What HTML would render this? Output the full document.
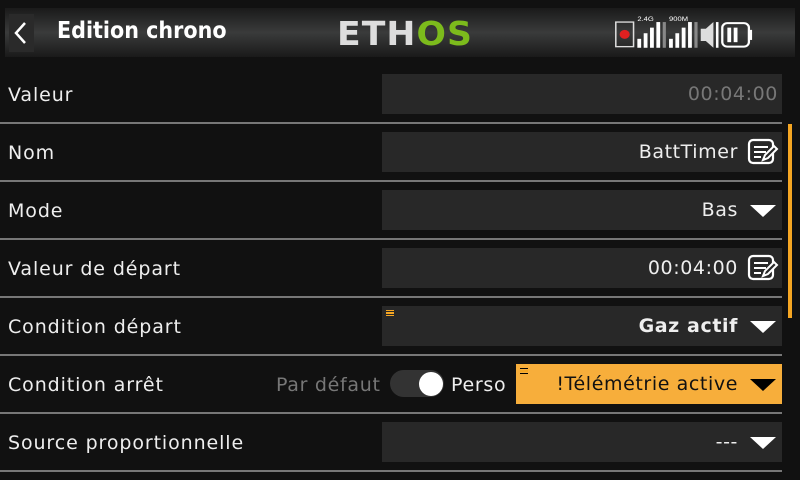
<!DOCTYPE html><html><head><style>
body{margin:0;width:800px;height:480px;background:#111;font-family:"Liberation Sans","DejaVu Sans",sans-serif;overflow:hidden;position:relative;color:#eee}
.hdr{position:absolute;left:5px;top:8px;width:790px;height:49px;background:linear-gradient(#1a1a1a,#3a3b3b 50%,#1a1a1a)}
.back{position:absolute;left:9px;top:14px;width:25px;height:38px;background:#2a2a2a}
.title{position:absolute;left:57px;top:18px;font-size:23px;font-weight:bold;color:#fff;font-family:"DejaVu Sans Condensed","DejaVu Sans",sans-serif}
.logo{position:absolute;left:337px;top:14px;font-size:33px;font-weight:bold;letter-spacing:1px;font-family:"DejaVu Sans",sans-serif;color:#ddd;transform:scaleX(1.05);transform-origin:left}
.row{position:absolute;left:0;width:782px;height:58px}
.lab{position:absolute;left:8px;top:18px;font-size:19px;letter-spacing:0.9px;color:#eee;font-family:"DejaVu Sans",sans-serif}
.sep{position:absolute;left:0;bottom:0;width:782px;height:2px;background:#777}
.f{position:absolute;left:382px;top:8px;width:400px;height:40px;background:#282828;font-size:19px;letter-spacing:0.6px;font-family:"DejaVu Sans",sans-serif}
.v{position:absolute;right:44px;top:9px;color:#eee}
.tri{position:absolute;right:6px;top:15px;width:0;height:0;border-left:13px solid transparent;border-right:13px solid transparent;border-top:12px solid #fff}
.ham{position:absolute;left:4px;top:4px;width:8px;height:6px;border-top:1.5px solid #f5a623;border-bottom:1.5px solid #f5a623;box-sizing:border-box}
.ham:after{content:"";position:absolute;left:0;top:1px;width:8px;height:1.5px;background:#f5a623}
</style></head><body>
<div class="hdr"></div>
<div class="back"><svg width="25" height="38"><path d="M16 9 L7 19 L16 29" stroke="#fff" stroke-width="2.5" fill="none"/></svg></div>
<div class="title">Edition chrono</div>
<div class="logo">ETH<span style="color:#7cbb1c">OS</span></div>
<svg style="position:absolute;left:612px;top:12px" width="180" height="38" viewBox="0 0 142 34" preserveAspectRatio="none">
<rect x="3" y="9" width="14" height="22" fill="none" stroke="#ddd" stroke-width="1.2"/><circle cx="10" cy="20" r="4" fill="#e02020"/>
<text x="20" y="8" font-size="6" fill="#fff" font-family="Liberation Sans">2.4G</text>
<rect x="20" y="24" width="3" height="8" fill="#fff"/><rect x="25" y="19" width="3" height="13" fill="#fff"/><rect x="30" y="14" width="3" height="18" fill="#fff"/><rect x="35" y="9" width="3" height="23" fill="#fff"/><rect x="40" y="9" width="2.5" height="23" fill="#888"/>
<text x="45" y="8" font-size="6" fill="#fff" font-family="Liberation Sans">900M</text>
<rect x="45" y="24" width="3" height="8" fill="#fff"/><rect x="50" y="19" width="3" height="13" fill="#fff"/><rect x="55" y="14" width="3" height="18" fill="#fff"/><rect x="60" y="9" width="3" height="23" fill="#fff"/><rect x="65" y="9" width="2.5" height="23" fill="#888"/>
<path d="M70 15 H74 L80 9 V32 L74 26 H70Z" fill="#ddd"/><rect x="82" y="9" width="2" height="23" fill="#fff"/>
<rect x="87" y="10" width="21" height="21" rx="4" fill="none" stroke="#fff" stroke-width="1.8"/><rect x="108" y="16" width="2.5" height="9" fill="#fff"/><rect x="91" y="14" width="3" height="13" fill="#fff"/><rect x="96" y="14" width="3" height="13" fill="#fff"/>
</svg>
<div style="position:absolute;left:788px;top:124px;width:4px;height:194px;background:#f5a623"></div>

<div class="row" style="top:66px"><div class="lab">Valeur</div><div class="f"><span class="v" style="right:4px;color:#777">00:04:00</span></div><div class="sep"></div></div>
<div class="row" style="top:124px"><div class="lab">Nom</div><div class="f"><span class="v">BattTimer</span><svg style="position:absolute;right:3px;top:6px" width="32" height="28"><rect x="2" y="2" width="24" height="23" rx="4" fill="none" stroke="#fff" stroke-width="2.2"/><path d="M7 9H21M7 14H19M7 19H14" stroke="#fff" stroke-width="2"/><path d="M16 22 L18 17 L27 8 L30 11 L21 20Z" fill="#282828" stroke="#fff" stroke-width="2"/></svg></div><div class="sep"></div></div>
<div class="row" style="top:182px"><div class="lab">Mode</div><div class="f"><span class="v">Bas</span><div class="tri"></div></div><div class="sep"></div></div>
<div class="row" style="top:240px"><div class="lab">Valeur de départ</div><div class="f"><span class="v">00:04:00</span><svg style="position:absolute;right:3px;top:6px" width="32" height="28"><rect x="2" y="2" width="24" height="23" rx="4" fill="none" stroke="#fff" stroke-width="2.2"/><path d="M7 9H21M7 14H19M7 19H14" stroke="#fff" stroke-width="2"/><path d="M16 22 L18 17 L27 8 L30 11 L21 20Z" fill="#282828" stroke="#fff" stroke-width="2"/></svg></div><div class="sep"></div></div>
<div class="row" style="top:298px"><div class="lab">Condition départ</div><div class="f"><div class="ham"></div><span class="v" style="font-weight:bold">Gaz actif</span><div class="tri"></div></div><div class="sep"></div></div>
<div class="row" style="top:356px"><div class="lab">Condition arrêt</div>
<span style="position:absolute;left:276px;top:18px;font-size:19px;letter-spacing:0.7px;color:#777;font-family:'DejaVu Sans',sans-serif">Par défaut</span>
<div style="position:absolute;left:390px;top:14px;width:54px;height:27px;border-radius:14px;background:#333"></div><div style="position:absolute;left:419px;top:16px;width:24px;height:24px;border-radius:50%;background:#fff"></div>
<span style="position:absolute;left:451px;top:18px;font-size:19px;letter-spacing:0.7px;color:#eee;font-family:'DejaVu Sans',sans-serif">Perso</span>
<div class="f" style="left:516px;width:266px;background:#f7ae3b"><div class="ham" style="border-color:#000"></div><span class="v" style="color:#111">!Télémétrie active</span><div class="tri" style="border-top-color:#000"></div></div><div class="sep"></div></div>
<div class="row" style="top:414px"><div class="lab">Source proportionnelle</div><div class="f"><span class="v">---</span><div class="tri"></div></div><div class="sep"></div></div>
</body></html>
